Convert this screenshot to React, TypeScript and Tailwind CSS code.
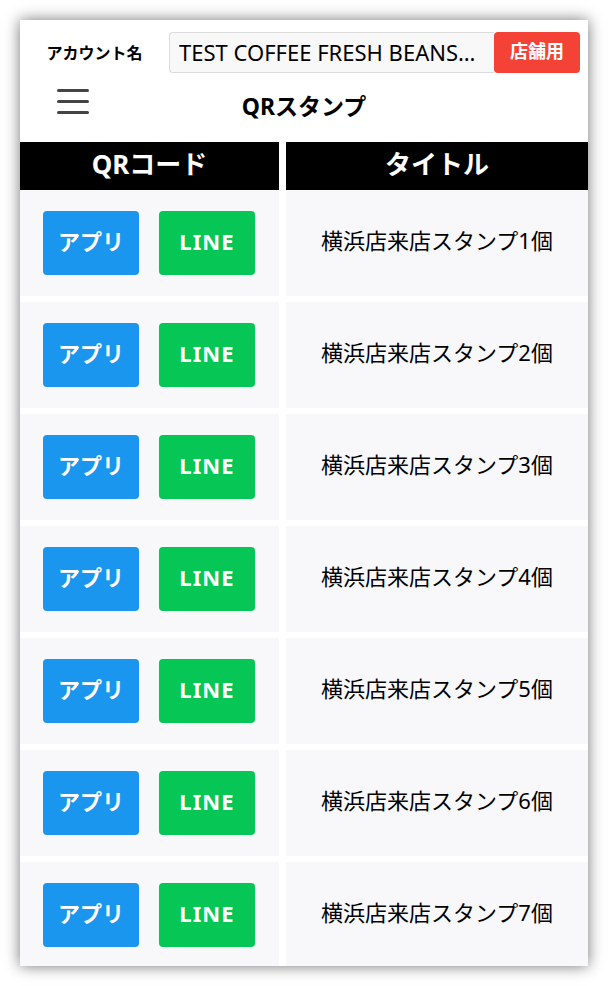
import React from 'react';

const rows = [1, 2, 3, 4, 5, 6, 7];

const font = { fontFamily: '"Noto Sans", "Noto Sans CJK JP", sans-serif' };

const App: React.FC = () => (
    <div className="bg-white min-h-[986px] p-[20px]" style={font}>
        <div className="w-[568px] h-[946px] bg-white shadow-[0_0_14px_rgba(0,0,0,0.55)] overflow-hidden">
            <div className="flex items-center pt-[12px] h-[53px]">
                <div className="w-[149px] flex justify-center">
                    <span className="text-[16px] font-bold text-black">アカウント名</span>
                </div>
                <div className="flex h-[41px] w-[411px]">
                    <div className="flex-1 min-w-0 flex items-center bg-[#f8f8f8] border border-[#dcdcdc] border-r-0 rounded-l-[4px] pl-[9px] pr-[16px]">
                        <span className="truncate text-[22px] text-black">TEST COFFEE FRESH BEANS STORE</span>
                    </div>
                    <div className="w-[86px] shrink-0 flex items-center justify-center bg-[#f44336] rounded-[4px] text-white text-[18px] font-bold pb-[2px]">
                        店舗用
                    </div>
                </div>
            </div>
            <div className="grid grid-cols-[1fr_auto_1fr] items-center h-[69px]">
                <div className="pl-[37px] -mt-[12px]">
                    <div className="flex flex-col gap-[8px] w-[32px]">
                        <span className="h-[3px] rounded-full bg-[#444]" />
                        <span className="h-[3px] rounded-full bg-[#444]" />
                        <span className="h-[3px] rounded-full bg-[#444]" />
                    </div>
                </div>
                <h1 className="text-[23px] font-bold text-black pb-[2px]">QRスタンプ</h1>
                <div />
            </div>
            <div className="grid grid-cols-[259px_302px] gap-x-[7px] gap-y-[6px]">
                <div className="bg-black h-[48px] flex items-center justify-center text-white text-[26px] font-bold pb-[3px]">QRコード</div>
                <div className="bg-black h-[48px] flex items-center justify-center text-white text-[26px] font-bold pb-[3px]">タイトル</div>
                {rows.map((n) => (
                    <React.Fragment key={n}>
                        <div className={`bg-[#f8f8fa] h-[106px] flex items-center gap-[20px] pl-[23px] ${n === 1 ? '-mt-[6px]' : ''}`}>
                            <button className="w-[96px] h-[64px] rounded-[4px] bg-[#1b96ef] text-white text-[22px] font-bold pb-[3px]">アプリ</button>
                            <button className="w-[96px] h-[64px] rounded-[4px] bg-[#06c755] text-white text-[22px] font-bold tracking-[0.05em] pb-[3px]">LINE</button>
                        </div>
                        <div className={`bg-[#f8f8fa] h-[106px] flex items-center justify-center text-[22px] text-black pb-[5px] ${n === 1 ? '-mt-[6px]' : ''}`}>
                            横浜店来店スタンプ{n}個
                        </div>
                    </React.Fragment>
                ))}
            </div>
        </div>
    </div>
);

export default App;
